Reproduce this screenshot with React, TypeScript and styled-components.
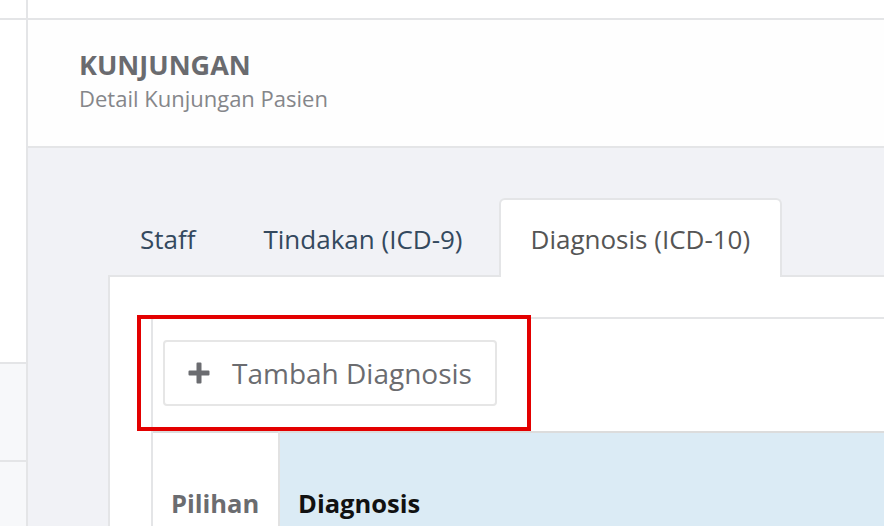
import styled, { createGlobalStyle } from "styled-components";

const GlobalStyle = createGlobalStyle`
  html, body {
    margin: 0;
    padding: 0;
    background: #ffffff;
  }
  body {
    font-family: "Open Sans", "Noto Sans", sans-serif;
  }
  * {
    box-sizing: border-box;
  }
`;

const Page = styled.div`
  display: flex;
  width: 884px;
  height: 526px;
  overflow: hidden;
`;

const Sidebar = styled.aside`
  width: 28px;
  flex-shrink: 0;
  display: flex;
  flex-direction: column;
  border-right: 2px solid #e4e5e7;

  & > * {
    flex-shrink: 0;
  }
`;

const SideTop = styled.div`
  height: 20px;
  border-bottom: 2px solid #e4e5e7;
`;

const SideSpace = styled.div`
  height: 342px;
`;

const SideItem = styled.div<{ $h: number }>`
  height: ${({ $h }) => $h}px;
  background: #f7f8fa;
  border-top: 2px solid #e4e5e7;
`;

const Main = styled.main`
  flex: 1;
  display: flex;
  flex-direction: column;
  min-width: 0;
`;

const TopBar = styled.div`
  height: 20px;
  flex-shrink: 0;
  border-bottom: 2px solid #e4e5e7;
`;

const Header = styled.header`
  height: 128px;
  flex-shrink: 0;
  padding: 27px 0 0 51px;
  border-bottom: 2px solid #e4e5e7;
  background: #fefefe;
`;

const Title = styled.h1`
  margin: 0;
  font-size: 27px;
  line-height: 36px;
  font-weight: 700;
  color: #6a6b6f;
`;

const Subtitle = styled.p`
  margin: 1px 0 0;
  font-size: 22px;
  line-height: 29px;
  color: #85868a;
`;

const Content = styled.section`
  flex: 1;
  background: #f1f2f6;
  padding: 50px 0 0 80px;
  display: flex;
  flex-direction: column;
`;

const Tabs = styled.nav`
  display: flex;
  align-items: flex-end;
  height: 79px;
  flex-shrink: 0;
  position: relative;
  z-index: 1;
`;

const Tab = styled.div<{ $active?: boolean }>`
  height: 79px;
  margin-right: 4px;
  padding: 0 30px;
  display: flex;
  align-items: center;
  font-size: 26px;
  white-space: nowrap;
  color: ${({ $active }) => ($active ? "#555555" : "#34495e")};
  background: ${({ $active }) => ($active ? "#ffffff" : "transparent")};
  border: 2px solid ${({ $active }) => ($active ? "#e4e5e7" : "transparent")};
  border-bottom: none;
  border-radius: 6px 6px 0 0;
`;

const Panel = styled.div`
  position: relative;
  flex: 1;
  margin-top: -2px;
  background: #ffffff;
  border-top: 2px solid #e4e5e7;
  border-left: 2px solid #e4e5e7;
  padding: 40px 0 0 41px;
`;

const Box = styled.div`
  height: 100%;
  border-top: 2px solid #e4e5e7;
  border-left: 2px solid #e4e5e7;
  border-top-left-radius: 3px;
  padding: 21px 0 0 0;
`;

const Toolbar = styled.div`
  padding-left: 10px;
  margin-bottom: 25px;
`;

const AddButton = styled.button`
  display: flex;
  align-items: center;
  width: 334px;
  height: 66px;
  padding: 0 0 0 23px;
  background: #ffffff;
  border: 2px solid #e6e6e6;
  border-radius: 4px;
  font-family: inherit;
  font-size: 28px;
  color: #6b6c70;
  cursor: pointer;

  svg {
    margin-right: 22px;
    flex-shrink: 0;
  }
`;

const Table = styled.table`
  width: 100%;
  border-collapse: collapse;
`;

const HeadCell = styled.th<{ $tint?: boolean; $w?: number }>`
  height: 100px;
  width: ${({ $w }) => ($w ? `${$w}px` : "auto")};
  padding: 0 0 12px 18px;
  vertical-align: bottom;
  text-align: left;
  font-size: 25.5px;
  font-weight: 700;
  color: ${({ $tint }) => ($tint ? "#111111" : "#6b6c70")};
  background: ${({ $tint }) => ($tint ? "#dbebf5" : "#ffffff")};
  border-top: 2px solid #dcdcdc;
  border-right: ${({ $tint }) => ($tint ? "none" : "2px solid #e2e2e2")};
`;

const Highlight = styled.div`
  position: absolute;
  left: 27px;
  top: 38px;
  width: 394px;
  height: 116px;
  border: 4px solid #e30000;
  pointer-events: none;
`;

const PlusIcon = () => (
  <svg width="22" height="22" viewBox="0 0 22 22">
    <path
      d="M8.5 1.5a1 1 0 0 1 1-1h3a1 1 0 0 1 1 1V8.5h7a1 1 0 0 1 1 1v3a1 1 0 0 1-1 1h-7v7a1 1 0 0 1-1 1h-3a1 1 0 0 1-1-1v-7h-7a1 1 0 0 1-1-1v-3a1 1 0 0 1 1-1h7z"
      fill="#6b6c70"
    />
  </svg>
);

export default function App() {
  return (
    <>
      <GlobalStyle />
      <Page>
        <Sidebar>
          <SideTop />
          <SideSpace />
          <SideItem $h={98} />
          <SideItem $h={100} />
        </Sidebar>
        <Main>
          <TopBar />
          <Header>
            <Title>KUNJUNGAN</Title>
            <Subtitle>Detail Kunjungan Pasien</Subtitle>
          </Header>
          <Content>
            <Tabs>
              <Tab>Staff</Tab>
              <Tab>Tindakan (ICD-9)</Tab>
              <Tab $active>Diagnosis (ICD-10)</Tab>
            </Tabs>
            <Panel>
              <Box>
                <Toolbar>
                  <AddButton type="button">
                    <PlusIcon />
                    Tambah Diagnosis
                  </AddButton>
                </Toolbar>
                <Table>
                  <thead>
                    <tr>
                      <HeadCell $w={126}>Pilihan</HeadCell>
                      <HeadCell $tint>Diagnosis</HeadCell>
                    </tr>
                  </thead>
                </Table>
              </Box>
              <Highlight />
            </Panel>
          </Content>
        </Main>
      </Page>
    </>
  );
}
